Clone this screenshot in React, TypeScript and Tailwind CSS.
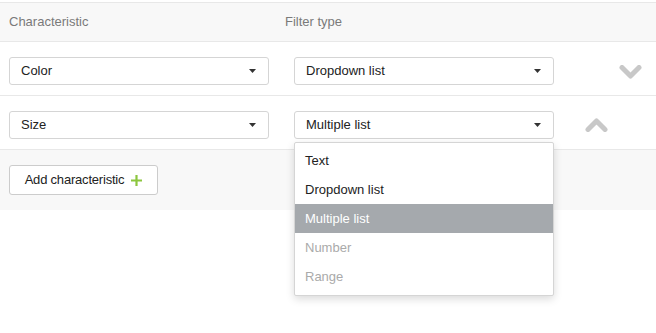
import { useState } from "react"

const options = [
  { label: "Text", disabled: false },
  { label: "Dropdown list", disabled: false },
  { label: "Multiple list", disabled: false },
  { label: "Number", disabled: true },
  { label: "Range", disabled: true },
]

function Caret() {
  return (
    <svg width="7" height="4" viewBox="0 0 7 4" className="shrink-0">
      <path d="M0 0h7L3.5 4z" fill="#333" />
    </svg>
  )
}

function Select({ value }: { value: string }) {
  return (
    <div className="w-[260px] h-[28px] flex items-center justify-between pl-[11px] pr-[12px] bg-white border border-[#d5d5d5] rounded-[3px] text-[13px] text-[#222]">
      <span>{value}</span>
      <Caret />
    </div>
  )
}

function Chevron({ up }: { up?: boolean }) {
  return (
    <svg width="23" height="14" viewBox="0 0 23 14">
      <path
        d={up ? "M3 11.5L11.5 3L20 11.5" : "M3 2.5L11.5 11L20 2.5"}
        fill="none"
        stroke="#c8c8c8"
        strokeWidth="5"
        strokeLinecap="round"
        strokeLinejoin="round"
      />
    </svg>
  )
}

export default function App() {
  const [selected] = useState("Multiple list")

  return (
    <div
      className="w-[656px] h-[333px] bg-white relative"
      style={{ fontFamily: '"Liberation Sans", Arial, sans-serif' }}
    >
      <div className="h-[2px]" />
      {/* Header */}
      <div className="h-[40px] bg-[#f8f8f8] border-t border-b border-[#e8e8e8] flex items-center text-[13px] text-[#7a7a7a]">
        <div className="w-[285px] pl-[9px]">Characteristic</div>
        <div>Filter type</div>
      </div>

      {/* Row 1 */}
      <div className="h-[54px] border-b border-[#e8e8e8] flex items-start pt-[15px] pl-[9px]">
        <Select value="Color" />
        <div className="ml-[25px]">
          <Select value="Dropdown list" />
        </div>
        <div className="ml-[65px] mt-[8px]">
          <Chevron />
        </div>
      </div>

      {/* Row 2 */}
      <div className="h-[54px] border-b border-[#e8e8e8] flex items-start pt-[15px] pl-[9px]">
        <Select value="Size" />
        <div className="ml-[25px] relative">
          <Select value={selected} />
          <div className="absolute left-0 top-[31px] w-[260px] bg-white border border-[#d5d5d5] rounded-[2px] shadow-[0_3px_8px_rgba(0,0,0,0.15)] pt-[3px] pb-[4px] z-10">
            {options.map((o) => (
              <div
                key={o.label}
                className={`h-[29px] flex items-center px-[10px] text-[13px] ${
                  o.label === selected
                    ? "bg-[#a5a9ad] text-white"
                    : o.disabled
                    ? "text-[#aaaaaa]"
                    : "text-[#222]"
                }`}
              >
                {o.label}
              </div>
            ))}
          </div>
        </div>
        <div className="ml-[31px] mt-[7px]">
          <Chevron up />
        </div>
      </div>

      {/* Footer */}
      <div className="h-[60px] bg-[#f8f8f8] flex items-center pl-[9px]">
        <button className="w-[149px] h-[30px] flex items-center justify-center gap-[7px] bg-white border border-[#cccccc] rounded-[3px] text-[13px] text-[#222] tracking-[-0.2px]">
          Add characteristic
          <svg width="11" height="11" viewBox="0 0 11 11">
            <path d="M5.5 0v11M0 5.5h11" stroke="#8cc63f" strokeWidth="2.2" />
          </svg>
        </button>
      </div>
    </div>
  )
}
